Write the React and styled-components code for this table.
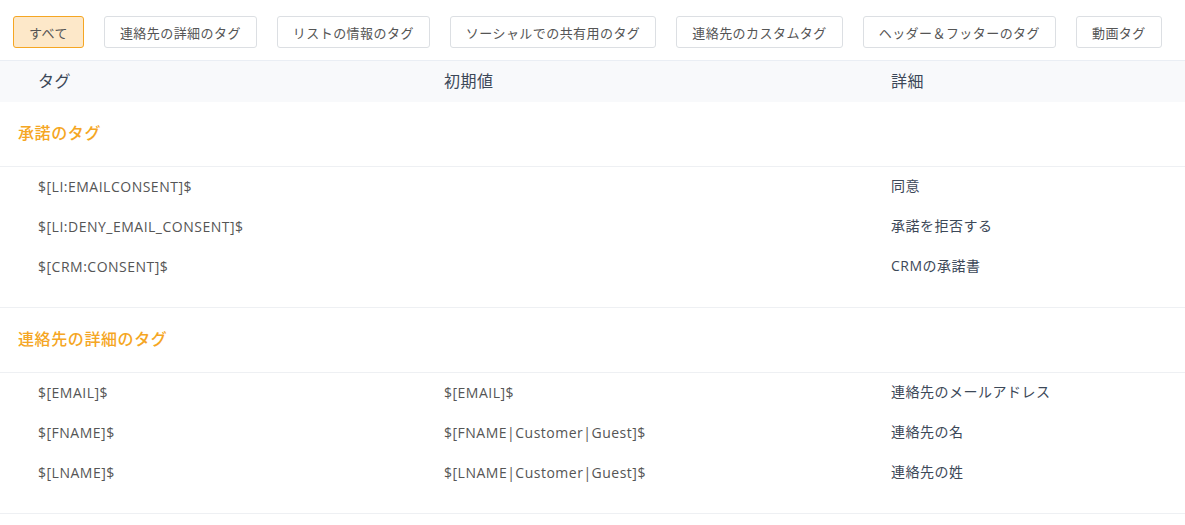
import React, { useState } from "react"
import styled, { createGlobalStyle } from "styled-components";

const GlobalStyle = createGlobalStyle`
    body {
        margin: 0;
        background: #fff;
        font-family: "Open Sans", "Noto Sans CJK JP", sans-serif;
    }
`;

const Page = styled.div`
    width: 1185px;
`;

const Toolbar = styled.div`
    display: flex;
    gap: 20px;
    padding: 16px 13px 12px;
`;

const FilterButton = styled.button`
    height: 32px;
    padding: 0 15px;
    border-radius: 3px;
    border: 1px solid ${p => p.$active ? "#f5a623" : "#dcdfe3"};
    background: ${p => p.$active ? "#fde8c9" : "#fff"};
    color: #555;
    font-family: "Open Sans", "Noto Sans CJK JP", sans-serif;
    font-size: 13px;
    letter-spacing: 0.44px;
    cursor: pointer;
`;

const Grid = styled.div`
    display: grid;
    grid-template-columns: 406px 447px 1fr;
    padding-left: 38px;
    align-items: center;
`;

const HeaderRow = styled(Grid)`
    height: 42px;
    padding-bottom: 3px;
    box-sizing: border-box;
    background: #f8f9fb;
    border-top: 1px solid #eaeef4;
    color: #3c4858;
    font-size: 16px;
    letter-spacing: 0.5px;
`;

const SectionTitle = styled.div`
    height: 65px;
    box-sizing: border-box;
    padding: 0 0 4px 18px;
    display: flex;
    align-items: center;
    color: #f5a623;
    font-size: 16px;
    font-weight: 500;
    letter-spacing: 0.6px;
    border-bottom: 1px solid #eef0f3;
`;

const Rows = styled.div`
    padding-bottom: 20px;
    border-bottom: 1px solid #eef0f3;
`;

const Row = styled(Grid)`
    height: 40px;
    font-size: 14px;
    letter-spacing: 0.5px;
`;

const Tag = styled.div`
    color: #555;
    margin-top: -1px;
`;

const Desc = styled.div`
    color: #3c4858;
    margin-top: -5px;
`;

const filters = [
    "すべて",
    "連絡先の詳細のタグ",
    "リストの情報のタグ",
    "ソーシャルでの共有用のタグ",
    "連絡先のカスタムタグ",
    "ヘッダー＆フッターのタグ",
    "動画タグ",
];

const sections = [
    {
        title: "承諾のタグ",
        rows: [
            ["$[LI:EMAILCONSENT]$", "", "同意"],
            ["$[LI:DENY_EMAIL_CONSENT]$", "", "承諾を拒否する"],
            ["$[CRM:CONSENT]$", "", "CRMの承諾書"],
        ],
    },
    {
        title: "連絡先の詳細のタグ",
        rows: [
            ["$[EMAIL]$", "$[EMAIL]$", "連絡先のメールアドレス"],
            ["$[FNAME]$", "$[FNAME|Customer|Guest]$", "連絡先の名"],
            ["$[LNAME]$", "$[LNAME|Customer|Guest]$", "連絡先の姓"],
        ],
    },
];

export default function App() {

    const [ active, setActive ] = useState(0);

    return(
        <Page>
            <GlobalStyle />
            <Toolbar>
                {filters.map((f, i) => (
                    <FilterButton key={f} $active={i === active} onClick={() => setActive(i)}>
                        {f}
                    </FilterButton>
                ))}
            </Toolbar>
            <HeaderRow>
                <div>タグ</div>
                <div>初期値</div>
                <div>詳細</div>
            </HeaderRow>
            {sections.map(s => (
                <div key={s.title}>
                    <SectionTitle>{s.title}</SectionTitle>
                    <Rows>
                        {s.rows.map(r => (
                            <Row key={r[0]}>
                                <Tag>{r[0]}</Tag>
                                <Tag>{r[1]}</Tag>
                                <Desc>{r[2]}</Desc>
                            </Row>
                        ))}
                    </Rows>
                </div>
            ))}
        </Page>
    )
}
